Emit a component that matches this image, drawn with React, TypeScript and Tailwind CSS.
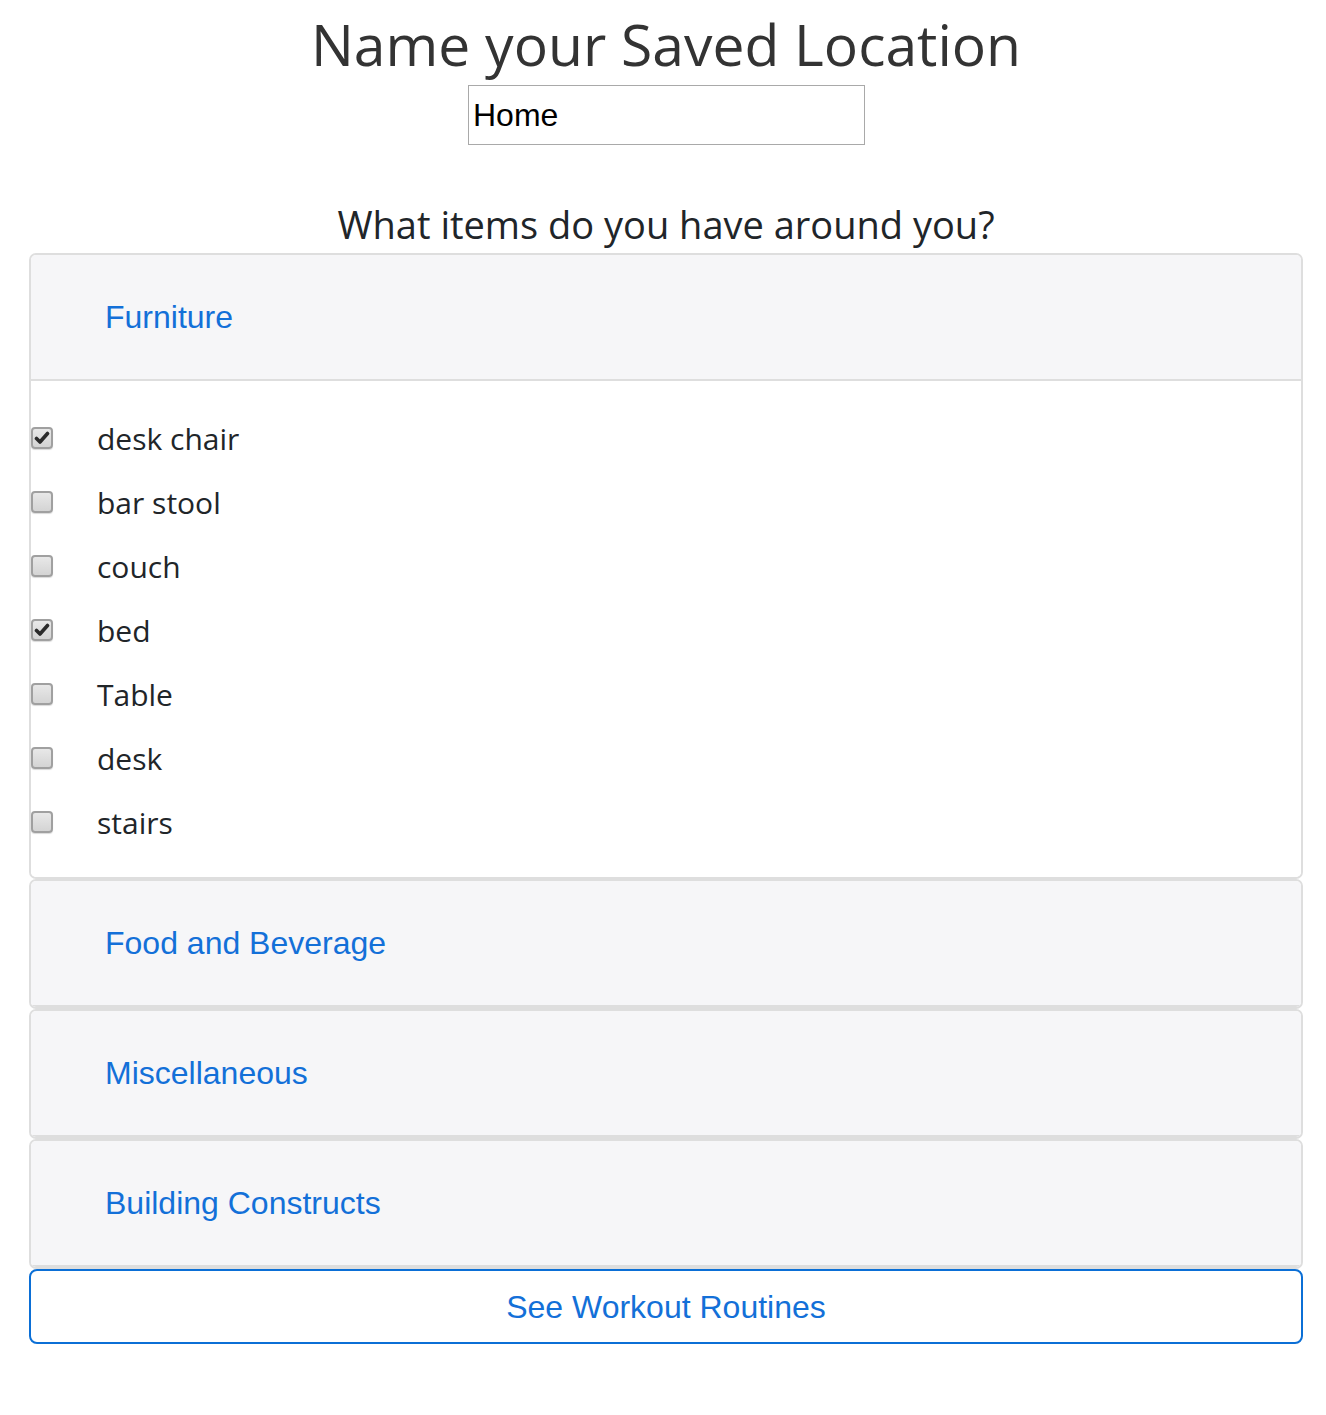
import React, { useState } from 'react';

const segoe = { fontFamily: '"Open Sans", "Noto Sans", sans-serif' };
const arial = { fontFamily: '"Liberation Sans", Arial, sans-serif' };

const furniture = [
  { label: 'desk chair', checked: true },
  { label: 'bar stool', checked: false },
  { label: 'couch', checked: false },
  { label: 'bed', checked: true },
  { label: 'Table', checked: false },
  { label: 'desk', checked: false },
  { label: 'stairs', checked: false },
];

const Checkbox: React.FC<{ checked: boolean; onClick: () => void }> = ({ checked, onClick }) => (
  <button
    type="button"
    onClick={onClick}
    className="w-[22px] h-[22px] rounded-[4px] border-2 border-[#a0a0a0] bg-gradient-to-b from-[#e8e8e8] to-[#d4d4d4] shadow-[0_1px_1px_rgba(0,0,0,0.15)] flex items-center justify-center shrink-0"
  >
    {checked && (
      <svg width="16" height="16" viewBox="0 0 16 16">
        <path d="M2.5 8.5 L6 12 L13.5 3.5" fill="none" stroke="#2b2b2b" strokeWidth="3.6" strokeLinecap="round" strokeLinejoin="round" />
      </svg>
    )}
  </button>
);

const CardHeader: React.FC<{ title: string; onClick: () => void }> = ({ title, onClick }) => (
  <div className="h-[126px] bg-[#f6f6f8] border-b-2 border-[#dedede] flex items-center pl-[74px]">
    <button type="button" onClick={onClick} className="text-[32px] text-[#1370d8] leading-none" style={arial}>
      {title}
    </button>
  </div>
);

export default function App() {
  const [open, setOpen] = useState<string | null>('Furniture');
  const [items, setItems] = useState(furniture);
  const [name, setName] = useState('Home');

  const sections = ['Furniture', 'Food and Beverage', 'Miscellaneous', 'Building Constructs'];

  return (
    <div className="min-h-screen bg-white pl-[29px] pr-[23px]">
      <h1 className="h-[85px] text-center text-[57px] leading-[88px] text-[#333]" style={segoe}>
        Name your Saved Location
      </h1>
      <div className="flex justify-center pl-[1px]">
        <input
          value={name}
          onChange={(e) => setName(e.target.value)}
          className="w-[397px] h-[60px] border border-[#a9a9a9] px-[4px] text-[32px] text-black outline-none"
          style={arial}
        />
      </div>
      <h2 className="text-center text-[38px] leading-[50px] text-[#212529] mt-[54px]" style={segoe}>
        What items do you have around you?
      </h2>
      <div className="mt-[4px]">
        {sections.map((s) => (
          <div key={s} className="border-2 border-[#dedede] rounded-[7px] overflow-hidden">
            <CardHeader title={s} onClick={() => setOpen(open === s ? null : s)} />
            {open === s && s === 'Furniture' && (
              <div className="pt-[25px] pb-[23px] bg-white">
                {items.map((it, i) => (
                  <div key={it.label} className="h-16 flex items-center">
                    <Checkbox
                      checked={it.checked}
                      onClick={() =>
                        setItems(items.map((x, j) => (j === i ? { ...x, checked: !x.checked } : x)))
                      }
                    />
                    <span className="ml-[44px] text-[30px] text-[#212529]" style={segoe}>
                      {it.label}
                    </span>
                  </div>
                ))}
              </div>
            )}
          </div>
        ))}
      </div>
      <button
        type="button"
        className="w-full h-[75px] border-2 border-[#0b6fd6] rounded-[8px] text-[32px] text-[#1370d8] bg-white"
        style={arial}
      >
        See Workout Routines
      </button>
    </div>
  );
}
